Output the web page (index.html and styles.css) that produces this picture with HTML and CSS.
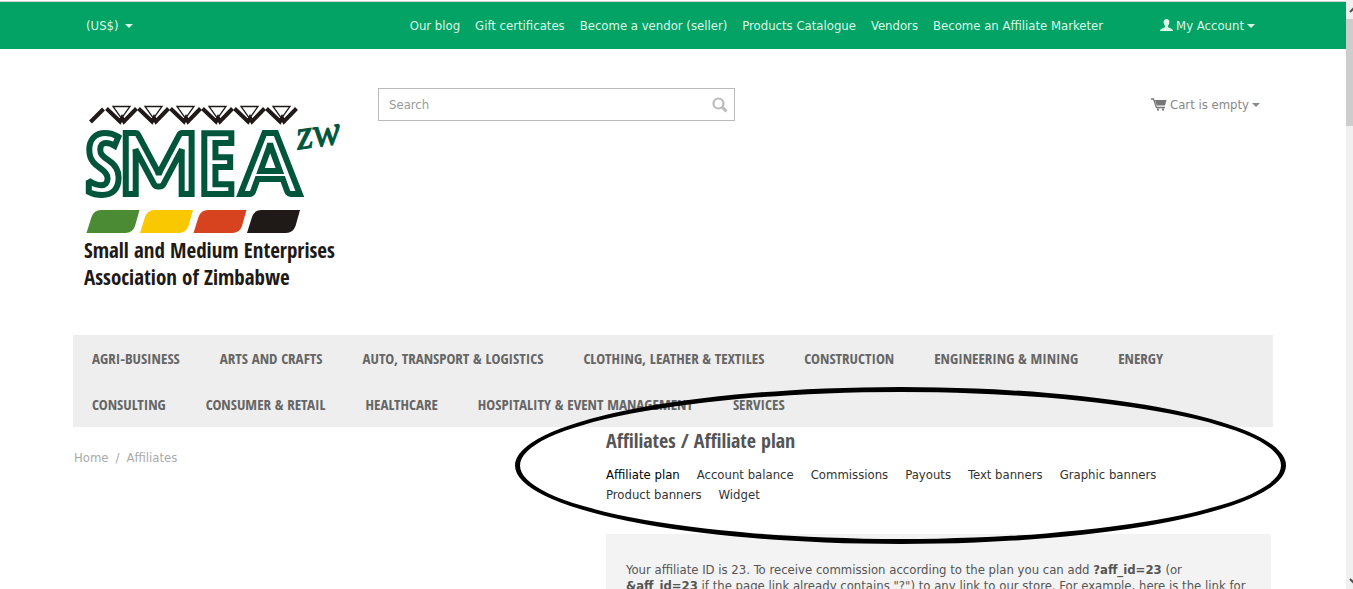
FILE: index.html
```html
<!DOCTYPE html>
<html lang="en">
<head>
<meta charset="utf-8">
<title>Affiliates / Affiliate plan</title>
<link rel="stylesheet" href="styles.css">
</head>
<body>
<div class="page">
  <div class="topbar">
    <div class="container topbar-inner">
      <button class="currency" type="button">(US$) <span class="caret"></span></button>
      <nav class="quick-links" aria-label="Quick links">
        <a href="#">Our blog</a>
        <a href="#">Gift certificates</a>
        <a href="#">Become a vendor (seller)</a>
        <a href="#">Products Catalogue</a>
        <a href="#">Vendors</a>
        <a href="#">Become an Affiliate Marketer</a>
      </nav>
      <button class="account" type="button">
        <svg width="13" height="13" viewBox="0 0 13 13" aria-hidden="true"><path fill="currentColor" d="M6.500 0C8.400 0 9.500 1.300 9.400 3.300C9.300 4.900 8.700 5.900 8 6.700V8.300C9.500 9.200 12.800 9.400 13 12H0C.2 9.400 3.500 9.200 5 8.300V6.700C4.300 5.900 3.700 4.900 3.600 3.300C3.500 1.300 4.600 0 6.500 0Z"/></svg>
        <span>My Account</span><span class="caret"></span>
      </button>
    </div>
  </div>

  <header class="container header">
    <a class="logo" href="#">
      <svg width="266" height="190" viewBox="82 102 266 190" role="img" aria-label="SMEA zw">
        <g fill="none" stroke="#1f1a17" stroke-width="4">
          <path d="M90.500 122L103.500 109"/>
          <g id="zig"><path d="M106.500 108.500L120 121.500L122 118L124 121.500L136.500 108.500"/><path stroke-width="1.300" d="M113 106.500H130L121.500 118.500Z"/></g>
          <use href="#zig" x="32"/><use href="#zig" x="64"/><use href="#zig" x="96"/><use href="#zig" x="128"/><use href="#zig" x="160"/>
        </g>
        <g class="logo-letters">
          <text class="narrow" x="86" y="194">S</text><text class="wide" x="119" y="194">M</text><text class="narrow" x="199" y="194">E</text><text class="wide" x="241" y="194">A</text>
        </g>
        <text class="logo-script" transform="rotate(-8 295 150)" x="298" y="150">zw</text>
        <path fill="#4b8b34" d="M86.500 233L91.500 217Q94 210 101 210H139.500L135 226Q132.500 233 125.500 233Z"/>
        <path fill="#fac800" d="M140 233L145 217Q147.500 210 154.500 210H193L188.500 226Q186 233 179 233Z"/>
        <path fill="#d6431e" d="M193.500 233L198.500 217Q201 210 208 210H246.500L242 226Q239.500 233 232.500 233Z"/>
        <path fill="#1f1a17" d="M247 233L252 217Q254.500 210 261.500 210H300L295.500 226Q293 233 286 233Z"/>
        <text class="logo-name" x="84" y="258">Small and Medium Enterprises</text>
        <text class="logo-name" x="84" y="285">Association of Zimbabwe</text>
      </svg>
    </a>
    <form class="search">
      <input type="text" placeholder="Search" aria-label="Search">
      <button type="submit" aria-label="Search"><svg width="16" height="16" viewBox="0 0 16 16"><circle cx="6.500" cy="6.500" r="5" fill="none" stroke="#bbb" stroke-width="2.200"/><path d="M10 10L14.500 14.500" stroke="#bbb" stroke-width="3"/></svg></button>
    </form>
    <button class="cart" type="button">
      <svg width="16" height="13" viewBox="0 0 16 13" aria-hidden="true"><path fill="none" stroke="#777" stroke-width="1.300" d="M0 1H2.500L5.500 9.500H14"/><path fill="#777" d="M3.800 2H15.500L14 7.500H5.800Z"/><path fill="#777" d="M6 10.500h2v2H6zM11 10.500h2v2h-2z"/></svg>
      <span>Cart is empty</span><span class="caret"></span>
    </button>
  </header>

  <nav class="container categories" aria-label="Categories">
    <a href="#">AGRI-BUSINESS</a>
    <a href="#">ARTS AND CRAFTS</a>
    <a href="#">AUTO, TRANSPORT &amp; LOGISTICS</a>
    <a href="#">CLOTHING, LEATHER &amp; TEXTILES</a>
    <a href="#">CONSTRUCTION</a>
    <a href="#">ENGINEERING &amp; MINING</a>
    <a href="#">ENERGY</a>
    <a href="#">CONSULTING</a>
    <a href="#">CONSUMER &amp; RETAIL</a>
    <a href="#">HEALTHCARE</a>
    <a href="#">HOSPITALITY &amp; EVENT MANAGEMENT</a>
    <a href="#">SERVICES</a>
  </nav>

  <div class="container content">
    <nav class="breadcrumbs" aria-label="Breadcrumb"><a href="#">Home</a><span>/</span><span>Affiliates</span></nav>
    <main class="main">
      <h1>Affiliates / Affiliate plan</h1>
      <nav class="tabs" aria-label="Affiliate sections">
        <a class="active" href="#">Affiliate plan</a>
        <a href="#">Account balance</a>
        <a href="#">Commissions</a>
        <a href="#">Payouts</a>
        <a href="#">Text banners</a>
        <a href="#">Graphic banners</a>
        <a href="#">Product banners</a>
        <a href="#">Widget</a>
      </nav>
      <p class="notice">Your affiliate ID is 23. To receive commission according to the plan you can add <b>?aff_id=23</b> (or <b>&amp;aff_id=23</b> if the page link already contains "?") to any link to our store. For example, here is the link for</p>
      <div class="callout"></div>
    </main>
  </div>
</div>
<div class="scrollbar" aria-hidden="true">
  <svg width="7" height="17" viewBox="0 0 7 17"><path d="M4 10L8 6" stroke="#505050" stroke-width="2"/></svg>
  <div class="thumb"></div>
  <svg class="down" width="7" height="17" viewBox="0 0 7 17"><path d="M4 7L8 11" stroke="#505050" stroke-width="2"/></svg>
</div>
</body>
</html>
```
FILE: styles.css
```css
* { box-sizing: border-box; }
body {
  margin: 0;
  display: flex;
  height: 100vh;
  overflow: hidden;
  background: #fff;
  color: #555;
  font: 13px/16px "DejaVu Sans Condensed", "Noto Sans", sans-serif;
}
a { color: inherit; text-decoration: none; }
button { border: 0; padding: 0; background: none; font: inherit; color: inherit; display: flex; align-items: center; }
.page { flex: 1; min-width: 0; overflow: hidden; border-top: 1px solid #fff; }
.container { max-width: 1200px; margin: 0 auto; }
.caret { border: 4px solid transparent; border-top-color: currentColor; border-bottom: 0; }

.topbar { background: #02a364; border-top: 1px solid #d5d5d5; color: #dcf7ea; }
.topbar-inner { display: flex; align-items: center; height: 47px; padding: 0 18px 0 13px; }
.currency { gap: 6px; }
.quick-links { display: flex; gap: 15px; margin-left: auto; white-space: nowrap; }
.account { gap: 3px; margin-left: 57px; white-space: nowrap; }

.header { display: grid; grid-template-columns: 305px minmax(0, 357px) 1fr; align-items: start; padding: 39px 13px 43px 0; }
.logo { padding: 14px 0 0 9px; }
.logo svg { display: block; }
.logo-letters { fill: #fff; stroke: #00553a; stroke-width: 6px; stroke-linejoin: miter; stroke-miterlimit: 2; }
.wide { font: bold 84px "Lato", sans-serif; }
.narrow { font: bold 84px "Open Sans Condensed", sans-serif; }
.logo-script { font: italic 42px "Liberation Serif", serif; fill: #00553a; stroke: #00553a; }
.logo-name { font: bold 21px "Open Sans Condensed", "Liberation Sans Narrow", sans-serif; fill: #1f1a17; }
.search { display: flex; align-items: center; height: 33px; border: 1px solid #bbb; padding: 0 6px 0 10px; }
.search input { flex: 1; min-width: 0; border: 0; padding: 0; outline: 0; background: none; font: inherit; }
.search input::placeholder { color: #999; opacity: 1; }
.cart { justify-self: end; gap: 3px; height: 33px; color: #888; white-space: nowrap; }

.categories { display: flex; flex-wrap: wrap; background: #eee; color: #666; font: bold 15px/46px "Open Sans Condensed", "Noto Sans Condensed", "Liberation Sans Narrow", sans-serif; }
.categories a { padding: 0 21px 0 19px; }

.content { display: grid; grid-template-columns: minmax(0, 533px) minmax(0, 665px); }
.breadcrumbs { display: flex; gap: 7px; padding: 23px 0 0 1px; color: #aaa; }
.main { position: relative; }
h1 { margin: 0; color: #555; font: bold 20px/28px "Open Sans Condensed", "Noto Sans Condensed", "Liberation Sans Narrow", sans-serif; }
.tabs { display: flex; flex-wrap: wrap; column-gap: 17px; margin: 10px 0 29px; padding-right: 20px; line-height: 20px; color: #333; }
.tabs .active { color: #000; }
.notice { margin: 0; padding: 28px 20px; background: #f3f3f3; }
.callout { position: absolute; left: -91px; right: -15px; top: -40px; height: 157px; border: 5px solid #000; border-radius: 50%; pointer-events: none; }

.scrollbar { width: 7px; display: flex; flex-direction: column; background: #f0f0f0; padding-top: 2px; }
.scrollbar svg { display: block; }
.thumb { height: 107px; background: #cdcdcd; }
.down { margin-top: auto; }
```
